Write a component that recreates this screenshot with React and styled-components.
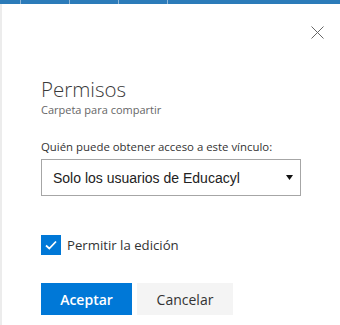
import React from 'react';
import styled, { createGlobalStyle } from 'styled-components';

const GlobalStyle = createGlobalStyle`
  html, body {
    margin: 0;
    padding: 0;
    background: #fff;
  }
  body {
    font-family: 'Open Sans', 'Noto Sans', sans-serif;
    color: #333;
  }
`;

const TopBar = styled.div`
  display: flex;
  height: 4px;
  background: #2b7bb9;
`;

const TopTab = styled.div`
  width: ${p => p.w}px;
  flex: ${p => (p.grow ? 1 : 'none')};
  border-right: ${p => (p.grow ? 'none' : '1px solid #8fb6d6')};
`;

const Panel = styled.div`
  height: 321px;
  box-sizing: border-box;
  border-left: 2px solid #ececec;
  padding: 0 17px 0 39px;
`;

const CloseRow = styled.div`
  display: flex;
  justify-content: flex-end;
  padding-top: 18px;
  height: 20px;
`;

const CloseButton = styled.button`
  display: flex;
  align-items: center;
  justify-content: center;
  width: 20px;
  height: 20px;
  padding: 0;
  margin-right: -4px;
  border: none;
  background: none;
  cursor: pointer;
`;

const Title = styled.h1`
  margin: 33px 0 0;
  font-size: 20.5px;
  line-height: 28px;
  font-weight: 300;
  color: #3a3a3a;
`;

const Subtitle = styled.div`
  font-size: 11px;
  line-height: 14px;
  color: #666;
`;

const FieldLabel = styled.label`
  display: block;
  margin-top: 22px;
  font-size: 11.4px;
  line-height: 16px;
  color: #333;
`;

const SelectBox = styled.div`
  display: flex;
  align-items: center;
  justify-content: space-between;
  margin-top: 4px;
  width: 260px;
  height: 37px;
  box-sizing: border-box;
  border: 1px solid #a6a6a6;
  padding: 0 7px 0 11px;
  font-family: 'Liberation Sans', Arial, sans-serif;
  font-size: 14px;
  color: #222;
`;

const CheckRow = styled.label`
  display: flex;
  align-items: center;
  gap: 6px;
  height: 20px;
  margin-top: 39px;
  font-size: 13.2px;
  line-height: 20px;
  color: #333;
`;

const CheckBox = styled.span`
  display: flex;
  align-items: center;
  justify-content: center;
  width: 20px;
  height: 20px;
  background: #0078d7;
`;

const Actions = styled.div`
  display: flex;
  gap: 5px;
  margin-top: 28px;
`;

const Button = styled.button`
  height: 32px;
  width: ${p => p.w}px;
  border: none;
  padding: 0;
  font-family: 'Open Sans', 'Noto Sans', sans-serif;
  font-size: 14px;
  font-weight: ${p => (p.primary ? 600 : 400)};
  background: ${p => (p.primary ? '#0078d7' : '#f4f4f4')};
  color: ${p => (p.primary ? '#fff' : '#333')};
  cursor: pointer;
`;

export default function App() {
  return (
    <>
      <GlobalStyle />
      <TopBar>
        <TopTab w={20} />
        <TopTab w={48} />
        <TopTab w={48} />
        <TopTab w={48} />
        <TopTab grow />
      </TopBar>
      <Panel>
        <CloseRow>
          <CloseButton aria-label="Cerrar">
            <svg width="13" height="13" viewBox="0 0 13 13">
              <path d="M0.5 0.5 L12.5 12.5 M12.5 0.5 L0.5 12.5" stroke="#666" strokeWidth="1" fill="none" />
            </svg>
          </CloseButton>
        </CloseRow>
        <Title>Permisos</Title>
        <Subtitle>Carpeta para compartir</Subtitle>
        <FieldLabel>Quién puede obtener acceso a este vínculo:</FieldLabel>
        <SelectBox>
          <span>Solo los usuarios de Educacyl</span>
          <svg width="7" height="5" viewBox="0 0 7 5">
            <polygon points="0,0 7,0 3.5,5" fill="#111" />
          </svg>
        </SelectBox>
        <CheckRow>
          <CheckBox>
            <svg width="14" height="14" viewBox="0 0 14 14">
              <path d="M2 7.5 L5.3 10.5 L12 3.5" stroke="#fff" strokeWidth="1.8" fill="none" />
            </svg>
          </CheckBox>
          Permitir la edición
        </CheckRow>
        <Actions>
          <Button primary w={91}>Aceptar</Button>
          <Button w={96}>Cancelar</Button>
        </Actions>
      </Panel>
    </>
  );
}
